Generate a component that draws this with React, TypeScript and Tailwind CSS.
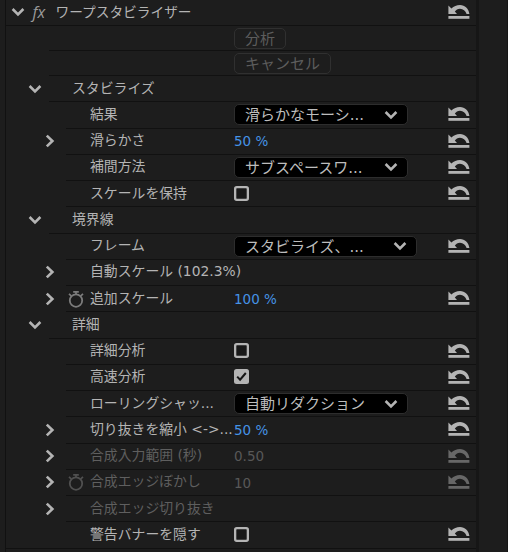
import type { ReactNode } from "react";

type RowData = {
  label: string;
  section?: boolean;
  arrow?: boolean;
  stopwatch?: boolean;
  disabled?: boolean;
  reset?: boolean;
  control?: ReactNode;
};

function Chevron({ open = false, className = "" }: { open?: boolean; className?: string }) {
  return open ? (
    <svg width="14" height="10" viewBox="0 0 14 10" className={className}>
      <path d="M1.6 2 L7 7.4 L12.4 2" fill="none" stroke="currentColor" strokeWidth="2.6" />
    </svg>
  ) : (
    <svg width="10" height="14" viewBox="0 0 10 14" className={className}>
      <path d="M1.8 1.6 L7.4 7 L1.8 12.4" fill="none" stroke="currentColor" strokeWidth="2.6" />
    </svg>
  );
}

function ResetIcon({ disabled }: { disabled?: boolean }) {
  return (
    <svg width="22" height="16" viewBox="0 0 22 16" className={disabled ? "text-[#676767]" : "text-[#b4b4b4]"}>
      <path d="M0.4 1.6 V10 H9 L6.8 7.6 C8.2 5.9 9.6 4.7 12 4.7 C15.2 4.7 17.4 6.8 18.6 10 H21.4 C20.6 4.6 17 1 12 1 C8.6 1 5.8 2.2 3.4 4.5 Z" fill="currentColor" />
      <path d="M0.4 12 H21.4 V14.8 H0.4 Z" fill="currentColor" />
    </svg>
  );
}

function Stopwatch({ disabled }: { disabled?: boolean }) {
  return (
    <svg width="16" height="18" viewBox="0 0 16 18" className={disabled ? "mt-px text-[#505050]" : "mt-px text-[#7c7c7c]"}>
      <circle cx="8" cy="10.6" r="6.2" fill="none" stroke="currentColor" strokeWidth="1.8" />
      <path d="M5.2 1.9 H10.8 M8 1.9 V5 M1 3.9 L3.2 5.9 M15 3.9 L12.8 5.9" fill="none" stroke="currentColor" strokeWidth="1.7" />
    </svg>
  );
}

function Select({ text, wide }: { text: string; wide?: boolean }) {
  return (
    <div className={`${wide ? "w-[183px]" : "w-[174px]"} mt-px flex h-[21px] items-center justify-between rounded-[5px] border border-[#2d2d2d] bg-black pr-[9px] pl-[10px] text-[15px] text-[#bdbdbd]`}>
      <span className="mt-[2px] leading-none whitespace-nowrap">{text}</span>
      <Chevron open className="shrink-0 text-[#b4b4b4]" />
    </div>
  );
}

function Checkbox({ checked }: { checked?: boolean }) {
  return (
    <svg width="15" height="15" viewBox="0 0 15 15" className="text-[#b4b4b4]">
      {checked ? (
        <>
          <rect width="15" height="15" rx="2.5" fill="currentColor" />
          <path d="M3.2 7.6 L6.1 10.7 L11.8 4" fill="none" stroke="#161616" strokeWidth="2" />
        </>
      ) : (
        <rect x="1.15" y="1.15" width="12.7" height="12.7" rx="1.6" fill="#181818" stroke="currentColor" strokeWidth="2.3" />
      )}
    </svg>
  );
}

function Value({ children, disabled }: { children: ReactNode; disabled?: boolean }) {
  return <span className={`${disabled ? "text-[#585858]" : "text-[#4593e6]"} mt-[3px] text-[13.5px] leading-none`}>{children}</span>;
}

function ActionButton({ children }: { children: ReactNode }) {
  return (
    <div className="flex h-[21px] items-center rounded-[5px] border border-[#303030] px-[10px] text-[15px] leading-none text-[#5c5c5c]">
      <span className="mt-[2px]">{children}</span>
    </div>
  );
}

function Row({ label, section, arrow, stopwatch, disabled, reset, control }: RowData) {
  return (
    <div className="flex h-[26.26px]">
      <div className={`${section ? "w-[43px] pl-[22px] pb-px" : "w-[60px] pl-[39px] pb-px"} flex shrink-0 items-center`}>
        {section && <Chevron open />}
        {arrow && <Chevron />}
      </div>
      <div className="flex min-w-0 flex-1 items-center border-b border-[#111] pb-px">
        <div className={`${section ? "w-[23px]" : "w-6"} flex shrink-0 items-center pl-[2px]`}>{stopwatch && <Stopwatch disabled={disabled} />}</div>
        <div className={`${section ? "w-[162px]" : "w-[144px]"} ${disabled ? "text-[#5f5f5f]" : ""} mt-px shrink-0 whitespace-nowrap leading-none`}>{label}</div>
        <div className="flex flex-1 items-center">{control}</div>
        {reset && <div className="mr-[6px]"><ResetIcon disabled={disabled} /></div>}
      </div>
    </div>
  );
}

const rows: RowData[] = [
  { label: "スタビライズ", section: true },
  { label: "結果", reset: true, control: <Select text="滑らかなモーシ..." /> },
  { label: "滑らかさ", arrow: true, reset: true, control: <Value>50 %</Value> },
  { label: "補間方法", reset: true, control: <Select text="サブスペースワ..." /> },
  { label: "スケールを保持", reset: true, control: <Checkbox /> },
  { label: "境界線", section: true },
  { label: "フレーム", reset: true, control: <Select wide text="スタビライズ、..." /> },
  { label: "自動スケール (102.3%)", arrow: true },
  { label: "追加スケール", arrow: true, stopwatch: true, reset: true, control: <Value>100 %</Value> },
  { label: "詳細", section: true },
  { label: "詳細分析", reset: true, control: <Checkbox /> },
  { label: "高速分析", reset: true, control: <Checkbox checked /> },
  { label: "ローリングシャッ...", reset: true, control: <Select text="自動リダクション" /> },
  { label: "切り抜きを縮小 <->...", arrow: true, reset: true, control: <Value>50 %</Value> },
  { label: "合成入力範囲 (秒)", arrow: true, disabled: true, reset: true, control: <Value disabled>0.50</Value> },
  { label: "合成エッジぼかし", arrow: true, stopwatch: true, disabled: true, reset: true, control: <Value disabled>10</Value> },
  { label: "合成エッジ切り抜き", arrow: true, disabled: true },
];

export default function App() {
  return (
    <div className="flex h-[552px] w-[508px] overflow-hidden bg-[#1d1d1d] font-['DejaVu_Sans','Noto_Sans_CJK_JP',sans-serif] text-[13.85px] text-[#b4b4b4]">
      <div className="w-[6px] shrink-0 border-r border-[#111]" />
      <div className="w-[470px] shrink-0">
        <div className="flex h-[26px] items-center border-b border-[#111] pb-px pl-[4.5px]">
          <Chevron open />
          <span className="ml-[8px] w-[23px] font-['Open_Sans',sans-serif] text-[16px] leading-none font-medium italic text-[#9a9a9a]">fx</span>
          <span className="mt-px flex-1 text-[13.7px] leading-none">ワープスタビライザー</span>
          <div className="mr-[6px]"><ResetIcon /></div>
        </div>
        <div className="ml-[43px] flex h-[25px] items-center border-b border-[#111] pl-[185px]">
          <ActionButton>分析</ActionButton>
        </div>
        <div className="ml-[43px] flex h-[25px] items-center border-b border-[#111] pl-[185px]">
          <ActionButton>キャンセル</ActionButton>
        </div>
        {rows.map((row) => <Row key={row.label} {...row} />)}
        <div className="border-b border-[#111]">
          <div className="-mb-px">
            <Row label="警告バナーを隠す" reset control={<Checkbox />} />
          </div>
        </div>
      </div>
      <div className="w-[3px] shrink-0 bg-[#161616]" />
      <div className="flex-1 border-r border-[#151515]" />
    </div>
  );
}
